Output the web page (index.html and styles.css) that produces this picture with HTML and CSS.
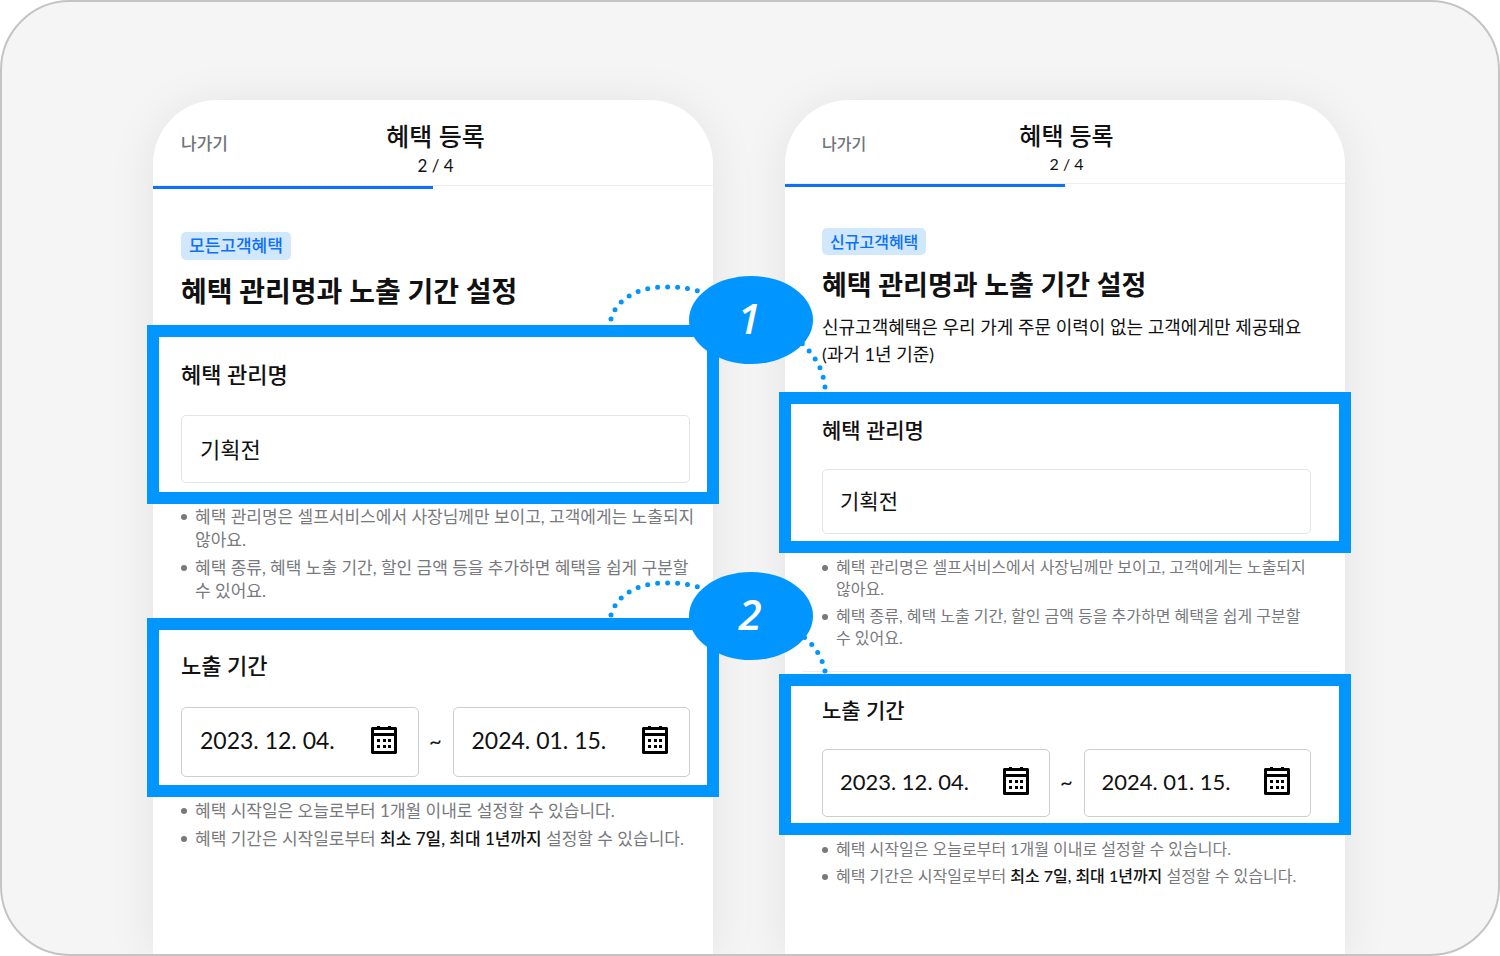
FILE: index.html
```
<!DOCTYPE html>
<html lang="ko">
<head>
    <meta charset="UTF-8">
    <meta name="viewport" content="width=device-width, initial-scale=1.0">
    <title>혜택 등록</title>
    <link rel="stylesheet" href="styles.css">
</head>
<body>

<!-- Shared calendar icon -->
<svg class="sprite" aria-hidden="true">
    <symbol id="calendar" viewBox="0 0 26 28">
        <path d="M6 0h3v3H6zM17 0h3v3h-3z"/>
        <path fill-rule="evenodd" d="M1 1h24l1 1v25l-1 1H1l-1-1V2zM3 4v3h20V4zM3 10v15h20V10z"/>
        <path d="M6 13h3v3H6zM12 13h3v3h-3zM17 13h3v3h-3zM6 19h3v3H6zM12 19h3v3h-3zM17 19h3v3h-3z"/>
    </symbol>
</svg>

<main class="board">
    <!-- All customers -->
    <section class="phone">
        <header class="topbar">
            <button type="button" class="exit">나가기</button>
            <h1>혜택 등록</h1>
            <p class="step">2 / 4</p>
        </header>
        <div class="track"><div class="bar"></div></div>

        <div class="intro">
            <span class="tag">모든고객혜택</span>
            <h2>혜택 관리명과 노출 기간 설정</h2>
        </div>

        <div class="highlight">
            <label for="nameAll">혜택 관리명</label>
            <input type="text" id="nameAll" class="field" value="기획전">
            <svg class="callout" viewBox="0 0 240 140" aria-hidden="true">
                <path class="dots" d="M10 53C16 32 39 20 67 21C77 21 87 22 97 25"/>
                <path class="dots" d="M224 121C222 104 215 89 196 73"/>
                <ellipse cx="150" cy="54" rx="62" ry="44"/>
                <text x="148" y="68">1</text>
            </svg>
        </div>
        <ul class="notes">
            <li>혜택 관리명은 셀프서비스에서 사장님께만 보이고, 고객에게는 노출되지<br>않아요.</li>
            <li>혜택 종류, 혜택 노출 기간, 할인 금액 등을 추가하면 혜택을 쉽게 구분할<br>수 있어요.</li>
        </ul>

        <div class="highlight period">
            <label for="startAll">노출 기간</label>
            <div class="dates">
                <div class="date">
                    <input type="text" id="startAll" value="2023. 12. 04.">
                    <button type="button" aria-label="시작일 선택"><svg><use href="#calendar"/></svg></button>
                </div>
                <span>~</span>
                <div class="date">
                    <input type="text" aria-label="종료일" value="2024. 01. 15.">
                    <button type="button" aria-label="종료일 선택"><svg><use href="#calendar"/></svg></button>
                </div>
            </div>
            <svg class="callout" viewBox="0 0 240 140" aria-hidden="true">
                <path class="dots" d="M10 53C16 32 39 20 67 21C77 21 87 22 97 25"/>
                <path class="dots" d="M224 109C221 95 214 83 198 71"/>
                <ellipse cx="150" cy="54" rx="62" ry="44"/>
                <text x="149" y="68">2</text>
            </svg>
        </div>
        <ul class="notes">
            <li>혜택 시작일은 오늘로부터 1개월 이내로 설정할 수 있습니다.</li>
            <li>혜택 기간은 시작일로부터 <strong>최소 7일, 최대 1년까지</strong> 설정할 수 있습니다.</li>
        </ul>
    </section>

    <!-- New customers -->
    <section class="phone small">
        <header class="topbar">
            <button type="button" class="exit">나가기</button>
            <h1>혜택 등록</h1>
            <p class="step">2 / 4</p>
        </header>
        <div class="track"><div class="bar"></div></div>

        <div class="intro">
            <span class="tag">신규고객혜택</span>
            <h2>혜택 관리명과 노출 기간 설정</h2>
            <p class="desc">신규고객혜택은 우리 가게 주문 이력이 없는 고객에게만 제공돼요<br>(과거 1년 기준)</p>
        </div>

        <div class="highlight">
            <label for="nameNew">혜택 관리명</label>
            <input type="text" id="nameNew" class="field" value="기획전">
        </div>
        <ul class="notes">
            <li>혜택 관리명은 셀프서비스에서 사장님께만 보이고, 고객에게는 노출되지<br>않아요.</li>
            <li>혜택 종류, 혜택 노출 기간, 할인 금액 등을 추가하면 혜택을 쉽게 구분할<br>수 있어요.</li>
        </ul>
        <hr>

        <div class="highlight period">
            <label for="startNew">노출 기간</label>
            <div class="dates">
                <div class="date">
                    <input type="text" id="startNew" value="2023. 12. 04.">
                    <button type="button" aria-label="시작일 선택"><svg><use href="#calendar"/></svg></button>
                </div>
                <span>~</span>
                <div class="date">
                    <input type="text" aria-label="종료일" value="2024. 01. 15.">
                    <button type="button" aria-label="종료일 선택"><svg><use href="#calendar"/></svg></button>
                </div>
            </div>
        </div>
        <ul class="notes">
            <li>혜택 시작일은 오늘로부터 1개월 이내로 설정할 수 있습니다.</li>
            <li>혜택 기간은 시작일로부터 <strong>최소 7일, 최대 1년까지</strong> 설정할 수 있습니다.</li>
        </ul>
    </section>
</main>

</body>
</html>
```
FILE: styles.css
```
* {
    box-sizing: border-box;
}
body {
    margin: 0;
    background-color: #fff;
    color: #111;
    font-family: Lato, "Noto Sans CJK KR", sans-serif;
}
h1, h2, p, ul {
    margin: 0;
    padding: 0;
}
button, input {
    border: none;
    padding: 0;
    background: none;
    color: inherit;
    font-family: inherit;
}
button {
    cursor: pointer;
}
.sprite {
    display: none;
}
.board {
    display: grid;
    grid-template-columns: repeat(2, minmax(0, 1fr));
    gap: 72px;
    min-height: 100vh;
    padding: 98px 153px 0 151px;
    border: 2px solid #c4c4c4;
    border-radius: 70px;
    background-color: #f5f5f5;
    overflow: hidden;
}

/* Phone */
.phone {
    --left: 28px;
    --right: 23px;
    padding-bottom: 48px;
    background-color: #fff;
    border-radius: 64px 64px 0 0;
    box-shadow: 0 4px 48px rgba(0, 0, 0, 0.08);
}
.topbar {
    position: relative;
    height: 85px;
    padding: 18px var(--right) 0 var(--left);
    text-align: center;
}
.exit {
    position: absolute;
    left: var(--left);
    top: 32px;
    color: #707478;
    font-size: 17px;
    font-weight: 500;
    line-height: 24px;
}
h1 {
    font-size: 25px;
    font-weight: 500;
    line-height: 36px;
}
.step {
    font-size: 17px;
    line-height: 23px;
}
.track {
    height: 4px;
    border-top: 1px solid #eee;
}
.bar {
    width: 50%;
    height: 3px;
    background-color: #0c70f8;
}
.intro {
    padding: 43px var(--right) 0 var(--left);
}
.tag {
    display: block;
    width: fit-content;
    padding: 0 8px;
    border-radius: 5px;
    background-color: #d1e8fc;
    color: #0c70f8;
    font-size: 17px;
    font-weight: 500;
    line-height: 28px;
}
h2 {
    margin-top: 10px;
    font-size: 28px;
    font-weight: 700;
    line-height: 42px;
}
.desc {
    margin-top: 8px;
    font-size: 18px;
    line-height: 27px;
}

/* Highlighted form block */
.highlight {
    position: relative;
    margin: 13px -6px 0;
    padding: 22px calc(var(--right) - 6px) 9px calc(var(--left) - 6px);
    border: 12px solid #0095ff;
    background-color: #fff;
}
.highlight label {
    display: block;
    margin-bottom: 24px;
    font-size: 22px;
    font-weight: 500;
    line-height: 32px;
}
.field {
    display: block;
    width: 100%;
    height: 68px;
    padding: 0 18px 3px;
    border: 1px solid #e3e4e6;
    border-radius: 5px;
    font-size: 22px;
}
.period {
    margin-top: 15px;
    padding-top: 20px;
    padding-bottom: 8px;
}
.period label {
    margin-bottom: 25px;
}
.dates {
    display: grid;
    grid-template-columns: minmax(0, 1fr) 34px minmax(0, 1fr);
    align-items: center;
    text-align: center;
    font-size: 22px;
}
.dates span {
    padding-bottom: 4px;
}
.date {
    display: flex;
    align-items: center;
    height: 70px;
    padding: 0 21px 4px 18px;
    border: 1px solid #cbcdd0;
    border-radius: 5px;
}
.date input {
    flex: 1;
    min-width: 0;
    font-size: 23px;
}
.date svg {
    display: block;
    width: 26px;
    height: 28px;
}

/* Numbered bubble joining the two phones */
.callout {
    position: absolute;
    top: -71px;
    right: -134px;
    z-index: 1;
    width: 240px;
    height: 140px;
    fill: #0095ff;
    pointer-events: none;
}
.period .callout {
    top: -68px;
}
.callout .dots {
    fill: none;
    stroke: #0095ff;
    stroke-width: 5;
    stroke-linecap: round;
    stroke-dasharray: 0 10;
}
.callout text {
    fill: #fff;
    font-family: "Open Sans", sans-serif;
    font-size: 42px;
    font-style: italic;
    font-weight: 600;
    text-anchor: middle;
}

/* Notes */
.notes {
    margin-top: 1px;
    padding: 0 0 0 var(--left);
    list-style: none;
    color: #77797c;
    font-size: 17px;
    line-height: 23px;
    white-space: nowrap;
}
.period + .notes {
    margin-top: 2px;
}
.notes + .period {
    margin-top: 16px;
}
.notes li {
    position: relative;
    padding-left: 14px;
}
.notes li + li {
    margin-top: 5px;
}
.notes li::before {
    content: "";
    position: absolute;
    left: 0;
    top: 9px;
    width: 6px;
    height: 6px;
    border-radius: 50%;
    background-color: #77797c;
}
.notes strong {
    color: #111;
    font-weight: 500;
}
hr {
    margin: 22px 25px 0 18px;
    border: none;
    border-top: 1px solid #eee;
}

/* Slightly smaller second phone */
.small {
    --left: 37px;
    --right: 34px;
}
.small .topbar {
    height: 83px;
}
.small h1 {
    font-size: 24px;
}
.small .exit, .small .step, .small .tag {
    font-size: 16px;
}
.small .step {
    line-height: 20px;
}
.small .intro {
    padding-top: 41px;
}
.small .tag {
    line-height: 27px;
}
.small h2 {
    margin-top: 9px;
    font-size: 27px;
}
.small .highlight {
    margin-top: 24px;
    padding-top: 10px;
    padding-bottom: 7px;
}
.small .highlight label {
    margin-bottom: 23px;
    font-size: 21px;
}
.small .field {
    height: 65px;
    padding-left: 17px;
    font-size: 21px;
}
.small .period {
    margin-top: 2px;
    padding-top: 8px;
    padding-bottom: 6px;
}
.small .date {
    height: 68px;
    padding: 0 20px 4px 17px;
}
.small .date input {
    font-size: 22px;
}
.small .notes {
    margin-top: 3px;
    font-size: 16px;
    line-height: 22px;
}
```
